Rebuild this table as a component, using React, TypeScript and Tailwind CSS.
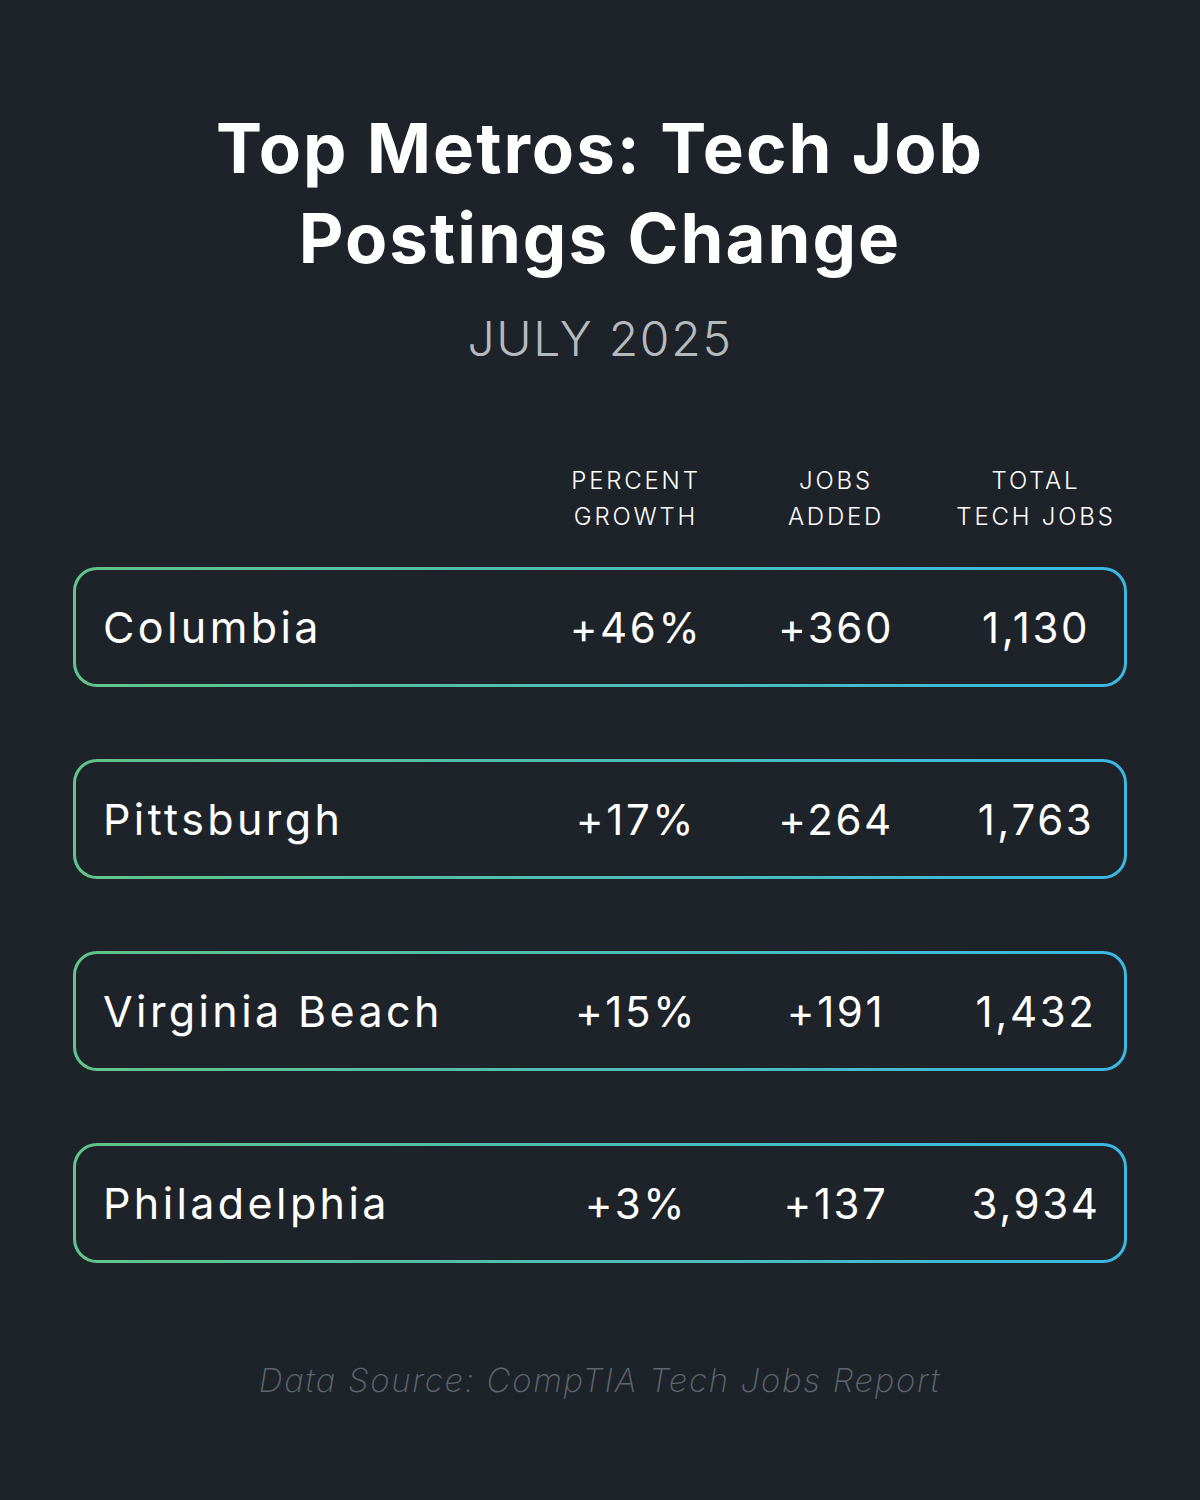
const rows = [
  { city: 'Columbia', growth: '+46%', added: '+360', total: '1,130' },
  { city: 'Pittsburgh', growth: '+17%', added: '+264', total: '1,763' },
  { city: 'Virginia Beach', growth: '+15%', added: '+191', total: '1,432' },
  { city: 'Philadelphia', growth: '+3%', added: '+137', total: '3,934' }
]

const font = { fontFamily: 'Inter, "Noto Sans", sans-serif' }

const MetroRow = ({ city, growth, added, total }: (typeof rows)[number]) => {
  return (
    <div className="rounded-[24px] bg-linear-to-r from-[#62c589] via-[#4dbcb4] to-[#3bb8e2] p-[3px]">
      <div className="grid h-[114px] grid-cols-[1fr_200px_200px_188px] items-center rounded-[21px] bg-[#1e232a] pl-[27px] text-[42px] font-normal tracking-[2.6px] text-white">
        <div className="text-[43px] tracking-[3.4px]">{city}</div>
        <div className="text-center">{growth}</div>
        <div className="text-center">{added}</div>
        <div className="pl-[12px] text-center">{total}</div>
      </div>
    </div>
  )
}

export default function App() {
  return (
    <div
      className="flex h-[1500px] w-[1200px] flex-col items-center bg-[#1e232a] pt-[103px]"
      style={font}>
      <h1 className="text-center text-[69px] leading-[90px] font-bold tracking-[2px] text-white">
        Top Metros: Tech Job
        <br />
        Postings Change
      </h1>
      <div className="mt-[32px] text-[48px] leading-[48px] font-light tracking-[1.7px] text-[#b5babe]">
        JULY 2025
      </div>

      <div className="mt-[100px] w-[1054px] px-[3px]">
        <div className="grid grid-cols-[1fr_200px_200px_188px] text-center text-[24px] leading-[36px] font-light tracking-[2.8px] text-white">
          <div />
          <div>
            PERCENT
            <br />
            GROWTH
          </div>
          <div>
            JOBS
            <br />
            ADDED
          </div>
          <div className="pl-[12px]">
            TOTAL
            <br />
            TECH JOBS
          </div>
        </div>
      </div>

      <div className="mt-[32px] flex w-[1054px] flex-col gap-[72px]">
        {rows.map((row) => (
          <MetroRow key={row.city} {...row} />
        ))}
      </div>

      <div className="mt-[97px] text-[33px] leading-[40px] font-extralight tracking-[1.7px] text-[#5f666e] italic">
        Data Source: CompTIA Tech Jobs Report
      </div>
    </div>
  )
}
